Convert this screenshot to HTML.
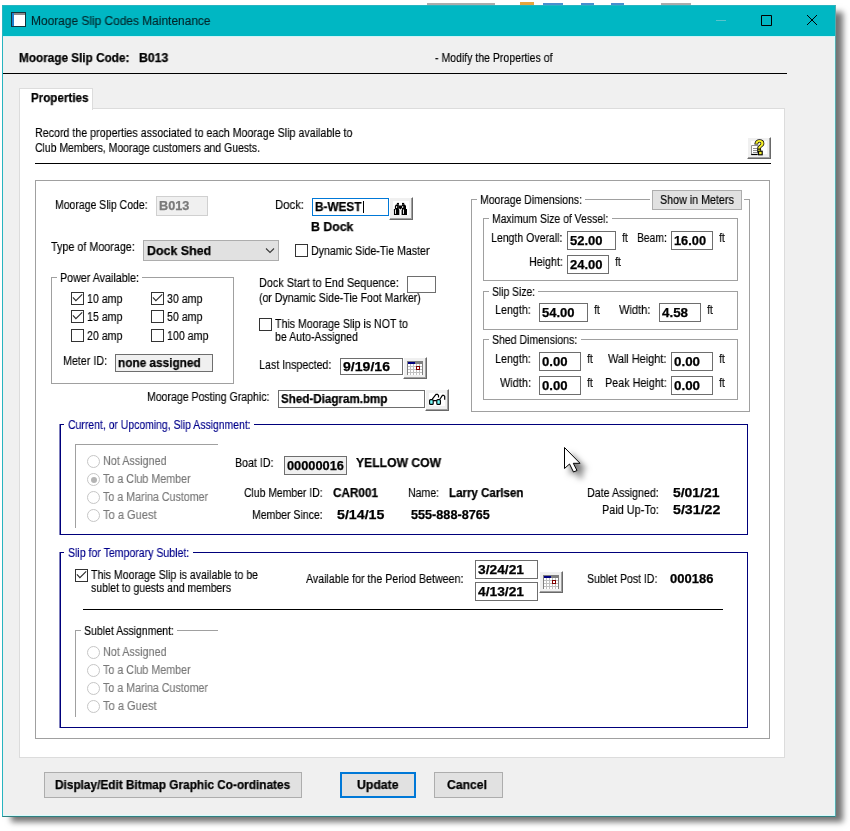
<!DOCTYPE html>
<html><head><meta charset="utf-8"><title>Moorage Slip Codes Maintenance</title>
<style>
html,body{margin:0;padding:0;}
body{width:850px;height:831px;position:relative;overflow:hidden;background:#fff;font-family:"Liberation Sans",sans-serif;font-size:12.5px;color:#000;}
.a{position:absolute;white-space:nowrap;line-height:13px;transform-origin:0 0;will-change:transform;-webkit-text-stroke:0.15px currentColor;}
.b{font-weight:bold;-webkit-text-stroke:0.25px currentColor;}
.win{position:absolute;left:2px;top:5px;width:834px;height:812px;box-sizing:border-box;background:#f0f0f0;border:1px solid #27b4c0;border-right-color:#5aa9ab;border-bottom-color:#2f7f80;box-shadow:8px 6px 6px -1px rgba(0,0,0,.55);}
.tb{position:absolute;left:0;top:0;width:832px;height:30px;background:#00b7c3;}
.hl{position:absolute;height:1px;background:#000;}
.in{position:absolute;box-sizing:border-box;background:#fff;border:1px solid #6e6e6e;}
.gb{position:absolute;box-sizing:border-box;border:1px solid #a0a0a0;}
.gm{position:absolute;background:#fff;height:3px;}
.cb{position:absolute;width:11px;height:11px;border:1px solid #333;background:#fff;}
.rb{position:absolute;width:11px;height:11px;border:1px solid #c6c6c6;border-radius:50%;background:#fff;}
.btn{position:absolute;box-sizing:border-box;background:#e1e1e1;border:1px solid #adadad;}
.b3{position:absolute;box-sizing:border-box;background:#f0f0f0;border:1px solid #fff;border-right-color:#696969;border-bottom-color:#696969;box-shadow:inset -1px -1px 0 #a0a0a0;}
.g{color:#787878;}
</style></head><body>
<div style="position:absolute;left:427px;top:3px;width:68px;height:2px;background:rgba(70,70,70,.45);"></div><div style="position:absolute;left:520px;top:2px;width:14px;height:3px;background:#e6a640;"></div><div style="position:absolute;left:543px;top:3px;width:20px;height:2px;background:#4a90d0;"></div><div style="position:absolute;left:581px;top:3px;width:13px;height:2px;background:#4a90d0;"></div><div style="position:absolute;left:611px;top:3px;width:13px;height:2px;background:#4a90d0;"></div><div style="position:absolute;left:661px;top:3px;width:30px;height:2px;background:rgba(90,90,90,.5);"></div>
<div class="win"><div class="tb"></div><div style="position:absolute;left:0;top:30px;width:832px;height:1px;background:#d0f4f6;"></div><div style="position:absolute;right:0;top:30px;width:1px;height:780px;background:#d8fbfc;"></div><div style="position:absolute;left:0;bottom:0;width:832px;height:1px;background:#d8fbfc;"></div></div>
<div style="position:absolute;left:11px;top:12px;width:15px;height:15px;box-sizing:border-box;background:#fff;border:1px solid #12343c;box-shadow:inset 2px 0 0 #1e7fd0, inset 0 2px 0 #8a8a8a;"></div>
<div class="a" style="left:31.1px;top:14px;font-size:12px;line-height:15px;color:#00262a;transform:scaleX(0.9929);">Moorage Slip Codes Maintenance</div>
<svg style="position:absolute;left:700px;top:5px" width="136" height="30" viewBox="0 0 136 30"><path d="M16 15.5h10" stroke="#58c4cc" stroke-width="1"/><path d="M61.5 10.5h10v10h-10z" fill="none" stroke="#000" stroke-width="1"/><path d="M107 10l10 10M117 10l-10 10" stroke="#000" stroke-width="1"/></svg>
<div class="a b" style="left:18.7px;top:52px;transform:scaleX(0.9406);">Moorage Slip Code:</div>
<div class="a b" style="left:138.5px;top:52px;transform:scaleX(0.9769);">B013</div>
<div class="a" style="left:435.1px;top:52px;transform:scaleX(0.8414);">- Modify the Properties of</div>
<div class="hl" style="left:3px;top:73px;width:784px;"></div>
<div style="position:absolute;left:19px;top:108px;width:766px;height:650px;background:#fff;border:1px solid #dcdcdc;box-sizing:border-box;"></div>
<div style="position:absolute;left:19px;top:88px;width:74px;height:22px;background:#fff;border:1px solid #dcdcdc;border-bottom:none;box-sizing:border-box;"></div>
<div class="a b" style="left:30.7px;top:92px;transform:scaleX(0.9281);">Properties</div>
<div class="a" style="left:34.7px;top:127px;transform:scaleX(0.8538);">Record the properties associated to each Moorage Slip available to</div>
<div class="a" style="left:34.7px;top:142px;transform:scaleX(0.8347);">Club Members, Moorage customers and Guests.</div>
<div class="hl" style="left:35px;top:163px;width:736px;"></div>
<div class="b3" style="left:747px;top:137px;width:24px;height:22px;"><div style="position:absolute;left:3px;top:3px;right:3px;bottom:4px;background:#fff;"></div><svg style="position:absolute;left:-6px;top:-6px;will-change:transform" width="35" height="32" viewBox="0 0 35 32"><path d="M9.5 13.5h6.5v9h-6.5z" fill="#fff" stroke="#909090" stroke-width="1"/><path d="M9.2 22.5h6.3" stroke="#000" stroke-width="1.2"/><path d="M11 16.5h4M11 18.5h4M11 20.5h4" stroke="#909090" stroke-width="1"/><text x="12.6" y="20.2" font-family="Liberation Sans, sans-serif" font-weight="bold" font-size="16" fill="#f4ee2a" stroke="#000" stroke-width="1.5" paint-order="stroke" textLength="10" lengthAdjust="spacingAndGlyphs">?</text><rect x="16.6" y="19.2" width="3.6" height="3.6" fill="#f4ee2a" stroke="#000" stroke-width="1.1"/></svg></div>
<div class="gb" style="left:35px;top:180px;width:735px;height:559px;border-color:#a0a0a0;"></div>
<div class="a" style="left:54.5px;top:199px;transform:scaleX(0.8381);">Moorage Slip Code:</div>
<div class="in" style="left:156px;top:196px;width:52px;height:20px;background:#f0f0f0;border-color:#d0d0d0;"></div>
<div class="a b" style="left:158.7px;top:200px;color:#7a7a7a;transform:scaleX(1.017);">B013</div>
<div class="a" style="left:274.5px;top:199px;transform:scaleX(0.9076);">Dock:</div>
<div class="in" style="left:312px;top:198px;width:77px;height:18px;border-color:#0078d7;"></div>
<div class="a b" style="left:314.7px;top:201px;transform:scaleX(0.9409);">B-WEST</div>
<div style="position:absolute;left:363px;top:201px;width:1px;height:12px;background:#000;"></div>
<div class="b3" style="left:389px;top:197px;width:24px;height:23px;"><div style="position:absolute;left:3px;top:3px;right:3px;bottom:4px;background:#fff;"></div><svg style="position:absolute;left:3px;top:4px" width="15" height="14" viewBox="0 0 15 14"><g fill="#000"><rect x="3.9" y="0.9" width="2.1" height="1.7"/><rect x="9" y="0.9" width="2.2" height="1.7"/><path d="M3 2.4h2.8v4.6h-3.9v-3z"/><path d="M9 2.4h2.9l1.1 1.6v3h-4z"/><path d="M5.7 3.6h3.4v2.2l-1.2 1.4h-1l-1.2-1.4z"/><path d="M0.9 6.9h4.9l0.5 1.5v4.5h-5.4z"/><path d="M9.1 6.9h4.9v6h-5.4v-4.5z"/></g><g fill="#fff"><rect x="2" y="7.5" width="0.9" height="4.4"/><rect x="10.1" y="7.5" width="0.9" height="4.4"/><rect x="3.1" y="4.1" width="1" height="2" rx=".5"/><rect x="9.2" y="4.1" width="1" height="2" rx=".5"/></g></svg></div>
<div class="a b" style="left:310.7px;top:220.5px;transform:scaleX(0.9843);">B Dock</div>
<div class="a" style="left:50.7px;top:241px;transform:scaleX(0.8614);">Type of Moorage:</div>
<div class="btn" style="left:143px;top:240px;width:136px;height:21px;"></div>
<div class="a b" style="left:146.6px;top:244px;font-size:13.5px;transform:scaleX(0.92);">Dock Shed</div>
<svg style="position:absolute;left:265px;top:247px" width="10" height="7" viewBox="0 0 10 7"><path d="M1 1.5l4 4 4-4" fill="none" stroke="#3a3a3a" stroke-width="1.1"/></svg>
<div class="cb" style="left:295px;top:244px;"></div>
<div class="a" style="left:310.7px;top:244.5px;transform:scaleX(0.8466);">Dynamic Side-Tie Master</div>
<div class="gb" style="left:51px;top:277px;width:183px;height:107px;border-color:#a0a0a0;"></div>
<div class="gm" style="left:57.4px;top:276px;width:85.0px;background:#fff;"></div>
<div class="a" style="left:59.5px;top:271.5px;transform:scaleX(0.8569);">Power Available:</div>
<div class="cb" style="left:71px;top:292px;"><svg width="11" height="11" viewBox="0 0 11 11" style="position:absolute;left:0;top:0"><path d="M0.9 4.3 L3.9 7.6 L10.2 1.3" fill="none" stroke="#2a2a2a" stroke-width="1.1"/></svg></div>
<div class="a" style="left:86.7px;top:293px;transform:scaleX(0.8489);">10 amp</div>
<div class="cb" style="left:71px;top:310px;"><svg width="11" height="11" viewBox="0 0 11 11" style="position:absolute;left:0;top:0"><path d="M0.9 4.3 L3.9 7.6 L10.2 1.3" fill="none" stroke="#2a2a2a" stroke-width="1.1"/></svg></div>
<div class="a" style="left:86.7px;top:311px;transform:scaleX(0.8489);">15 amp</div>
<div class="cb" style="left:71px;top:329px;"></div>
<div class="a" style="left:86.7px;top:330px;transform:scaleX(0.8489);">20 amp</div>
<div class="cb" style="left:151px;top:292px;"><svg width="11" height="11" viewBox="0 0 11 11" style="position:absolute;left:0;top:0"><path d="M0.9 4.3 L3.9 7.6 L10.2 1.3" fill="none" stroke="#2a2a2a" stroke-width="1.1"/></svg></div>
<div class="a" style="left:166.7px;top:293px;transform:scaleX(0.8489);">30 amp</div>
<div class="cb" style="left:151px;top:310px;"></div>
<div class="a" style="left:166.7px;top:311px;transform:scaleX(0.8489);">50 amp</div>
<div class="cb" style="left:151px;top:329px;"></div>
<div class="a" style="left:166.7px;top:330px;transform:scaleX(0.8509);">100 amp</div>
<div class="a" style="left:62.7px;top:355px;transform:scaleX(0.8559);">Meter ID:</div>
<div class="in" style="left:115px;top:354px;width:98px;height:18px;background:#f0f0f0;"></div>
<div class="a b" style="left:117.5px;top:357px;transform:scaleX(0.9437);">none assigned</div>
<div class="a" style="left:258.7px;top:276.8px;transform:scaleX(0.8671);">Dock Start to End Sequence:</div>
<div class="a" style="left:258.7px;top:292px;transform:scaleX(0.843);">(or Dynamic Side-Tie Foot Marker)</div>
<div class="in" style="left:407px;top:276px;width:29px;height:17px;"></div>
<div class="cb" style="left:259px;top:318px;"></div>
<div class="a" style="left:275.1px;top:317.5px;transform:scaleX(0.8483);">This Moorage Slip is NOT to</div>
<div class="a" style="left:275.1px;top:331px;transform:scaleX(0.8469);">be Auto-Assigned</div>
<div class="a" style="left:258.7px;top:359px;transform:scaleX(0.854);">Last Inspected:</div>
<div class="in" style="left:340px;top:358px;width:63px;height:17px;"></div>
<div class="a b" style="left:343.1px;top:360.5px;transform:scaleX(1.1266);">9/19/16</div>
<div class="b3" style="left:403px;top:357px;width:24px;height:22px;"><div style="position:absolute;left:3px;top:3px;right:3px;bottom:4px;background:#fff;"></div><svg style="position:absolute;left:3px;top:3px" width="16" height="14" viewBox="0 0 16 14" shape-rendering="crispEdges"><rect width="16" height="14" fill="#c0c0c0"/><rect width="16" height="3" fill="#808080"/><rect x="1" y="1" width="7" height="2" fill="#000080"/><rect x="0" y="0" width="1" height="14" fill="#808080"/><rect x="15" y="0" width="1" height="14" fill="#808080"/><rect x="1" y="3" width="2" height="2" fill="#fff"/><rect x="1" y="6" width="2" height="2" fill="#fff"/><rect x="1" y="9" width="2" height="2" fill="#fff"/><rect x="1" y="12" width="2" height="2" fill="#fff"/><rect x="4" y="3" width="2" height="2" fill="#fff"/><rect x="4" y="6" width="2" height="2" fill="#fff"/><rect x="4" y="9" width="2" height="2" fill="#fff"/><rect x="4" y="12" width="2" height="2" fill="#fff"/><rect x="7" y="3" width="2" height="2" fill="#fff"/><rect x="7" y="6" width="2" height="2" fill="#fff"/><rect x="7" y="9" width="2" height="2" fill="#fff"/><rect x="7" y="12" width="2" height="2" fill="#fff"/><rect x="10" y="3" width="2" height="2" fill="#fff"/><rect x="10" y="6" width="2" height="2" fill="#fff"/><rect x="10" y="9" width="2" height="2" fill="#fff"/><rect x="10" y="12" width="2" height="2" fill="#fff"/><rect x="13" y="3" width="2" height="2" fill="#fff"/><rect x="13" y="6" width="2" height="2" fill="#fff"/><rect x="13" y="9" width="2" height="2" fill="#fff"/><rect x="13" y="12" width="2" height="2" fill="#fff"/><rect x="9.5" y="5.5" width="3" height="3" fill="#fff" stroke="#800000" stroke-width="1"/></svg></div>
<div class="a" style="left:146.7px;top:391.4px;transform:scaleX(0.8429);">Moorage Posting Graphic:</div>
<div class="in" style="left:278px;top:390px;width:147px;height:18px;"></div>
<div class="a b" style="left:280.7px;top:393px;transform:scaleX(0.9284);">Shed-Diagram.bmp</div>
<div class="b3" style="left:425px;top:389px;width:24px;height:22px;"><div style="position:absolute;left:3px;top:3px;right:3px;bottom:4px;background:#fff;"></div><svg style="position:absolute;left:-6px;top:-5.7px" width="35" height="32" viewBox="0 0 35 32"><rect x="9.6" y="15.6" width="3.6" height="4.8" rx="1" fill="#7ff" stroke="#000" stroke-width="1.15"/><rect x="16.8" y="15.6" width="3.6" height="4.8" rx="1" fill="#7ff" stroke="#000" stroke-width="1.15"/><path d="M13.2 16.6h3.6M12.3 15.2L16 10.4h1.6l0.9 1v2.2M19.9 15.3L22.4 11.4h1.4l0.9 1v3.3" fill="none" stroke="#000" stroke-width="1.2"/></svg></div>
<div class="gb" style="left:471px;top:199px;width:279px;height:213px;border-color:#a0a0a0;"></div>
<div class="gm" style="left:477.4px;top:198px;width:108.0px;background:#fff;"></div>
<div class="a" style="left:479.5px;top:193.5px;transform:scaleX(0.8389);">Moorage Dimensions:</div>
<div class="gm" style="left:650px;top:198px;width:94px;"></div>
<div class="btn" style="left:652px;top:190px;width:90px;height:20px;"></div>
<div class="a" style="left:659.7px;top:194px;transform:scaleX(0.8566);">Show in Meters</div>
<div class="gb" style="left:483px;top:218px;width:255px;height:63px;border-color:#a0a0a0;"></div>
<div class="gm" style="left:489.4px;top:217px;width:122.20000000000005px;background:#fff;"></div>
<div class="a" style="left:491.5px;top:212.5px;transform:scaleX(0.8321);">Maximum Size of Vessel:</div>
<div class="a" style="left:490.7px;top:232.4px;transform:scaleX(0.8422);">Length Overall:</div>
<div class="in" style="left:567px;top:231px;width:49px;height:19px;"></div>
<div class="a b" style="left:569.5px;top:235px;transform:scaleX(1.0422);">52.00</div>
<div class="a" style="left:621.7px;top:232.4px;transform:scaleX(0.8342);">ft</div>
<div class="a" style="left:636.7px;top:232.4px;transform:scaleX(0.8246);">Beam:</div>
<div class="in" style="left:671px;top:231px;width:42px;height:19px;"></div>
<div class="a b" style="left:674.1px;top:235px;transform:scaleX(1.023);">16.00</div>
<div class="a" style="left:718.7px;top:232.4px;transform:scaleX(0.8342);">ft</div>
<div class="a" style="left:528.7px;top:256.4px;transform:scaleX(0.8533);">Height:</div>
<div class="in" style="left:567px;top:255px;width:42px;height:19px;"></div>
<div class="a b" style="left:569.5px;top:259px;transform:scaleX(1.0422);">24.00</div>
<div class="a" style="left:614.7px;top:256.4px;transform:scaleX(0.8342);">ft</div>
<div class="gb" style="left:483px;top:291px;width:255px;height:39px;border-color:#a0a0a0;"></div>
<div class="gm" style="left:489.4px;top:290px;width:49.0px;background:#fff;"></div>
<div class="a" style="left:491.5px;top:285.5px;transform:scaleX(0.8252);">Slip Size:</div>
<div class="a" style="left:494.7px;top:304.4px;transform:scaleX(0.8581);">Length:</div>
<div class="in" style="left:539px;top:303px;width:49px;height:19px;"></div>
<div class="a b" style="left:541.5px;top:307px;transform:scaleX(1.0422);">54.00</div>
<div class="a" style="left:593.5px;top:304.4px;transform:scaleX(0.8342);">ft</div>
<div class="a" style="left:619.1px;top:304.4px;transform:scaleX(0.8861);">Width:</div>
<div class="in" style="left:659px;top:303px;width:42px;height:19px;"></div>
<div class="a b" style="left:662.1px;top:307px;transform:scaleX(1.068);">4.58</div>
<div class="a" style="left:707.1px;top:304.4px;transform:scaleX(0.8342);">ft</div>
<div class="gb" style="left:483px;top:339px;width:255px;height:61px;border-color:#a0a0a0;"></div>
<div class="gm" style="left:489.4px;top:338px;width:91.20000000000005px;background:#fff;"></div>
<div class="a" style="left:491.5px;top:333.5px;transform:scaleX(0.8398);">Shed Dimensions:</div>
<div class="a" style="left:494.7px;top:353px;transform:scaleX(0.8581);">Length:</div>
<div class="in" style="left:539px;top:352px;width:42px;height:19px;"></div>
<div class="a b" style="left:541.5px;top:356px;transform:scaleX(1.0516);">0.00</div>
<div class="a" style="left:586.5px;top:353px;transform:scaleX(0.8342);">ft</div>
<div class="a" style="left:608.1px;top:353px;transform:scaleX(0.8727);">Wall Height:</div>
<div class="in" style="left:671px;top:352px;width:42px;height:19px;"></div>
<div class="a b" style="left:674.1px;top:356px;transform:scaleX(1.068);">0.00</div>
<div class="a" style="left:718.7px;top:353px;transform:scaleX(0.8342);">ft</div>
<div class="a" style="left:499.5px;top:377px;transform:scaleX(0.8748);">Width:</div>
<div class="in" style="left:539px;top:376px;width:42px;height:19px;"></div>
<div class="a b" style="left:541.5px;top:380px;transform:scaleX(1.0516);">0.00</div>
<div class="a" style="left:586.5px;top:377px;transform:scaleX(0.8342);">ft</div>
<div class="a" style="left:604.7px;top:377px;transform:scaleX(0.8634);">Peak Height:</div>
<div class="in" style="left:671px;top:376px;width:42px;height:19px;"></div>
<div class="a b" style="left:674.1px;top:380px;transform:scaleX(1.068);">0.00</div>
<div class="a" style="left:718.7px;top:377px;transform:scaleX(0.8342);">ft</div>
<div class="gb" style="left:60px;top:424px;width:688px;height:111px;border-color:#00007b;"></div>
<div style="position:absolute;left:59px;top:424px;width:1px;height:111px;background:rgba(0,0,123,.5);"></div>
<div class="gm" style="left:64.4px;top:423px;width:189.6px;"></div>
<div class="a" style="left:67.5px;top:419px;color:#00008b;transform:scaleX(0.8344);">Current, or Upcoming, Slip Assignment:</div>
<div style="position:absolute;left:75px;top:444px;width:143px;height:84px;border-left:1px solid #a0a0a0;border-top:1px solid #a0a0a0;box-sizing:border-box;"></div>
<div class="rb" style="left:87px;top:455px;"></div>
<div class="a g" style="left:102.5px;top:455px;transform:scaleX(0.8633);">Not Assigned</div>
<div class="rb" style="left:87px;top:473px;"><div style="position:absolute;left:2.5px;top:2.5px;width:6px;height:6px;border-radius:50%;background:#b4b4b4;"></div></div>
<div class="a g" style="left:102.5px;top:473px;transform:scaleX(0.8578);">To a Club Member</div>
<div class="rb" style="left:87px;top:491px;"></div>
<div class="a g" style="left:102.5px;top:491px;transform:scaleX(0.8547);">To a Marina Customer</div>
<div class="rb" style="left:87px;top:509px;"></div>
<div class="a g" style="left:102.5px;top:509px;transform:scaleX(0.8866);">To a Guest</div>
<div class="a" style="left:234.7px;top:457px;transform:scaleX(0.8501);">Boat ID:</div>
<div class="in" style="left:284px;top:456px;width:63px;height:19px;background:#f0f0f0;"></div>
<div class="a b" style="left:286.7px;top:460px;transform:scaleX(1.0247);">00000016</div>
<div class="a b" style="left:356.1px;top:457px;transform:scaleX(0.9714);">YELLOW COW</div>
<div class="a" style="left:243.5px;top:487px;transform:scaleX(0.8319);">Club Member ID:</div>
<div class="a b" style="left:332.7px;top:487px;transform:scaleX(0.9387);">CAR001</div>
<div class="a" style="left:407.7px;top:487px;transform:scaleX(0.8417);">Name:</div>
<div class="a b" style="left:448.7px;top:487px;transform:scaleX(0.923);">Larry Carlsen</div>
<div class="a" style="left:586.7px;top:487px;transform:scaleX(0.8538);">Date Assigned:</div>
<div class="a b" style="left:672.7px;top:487px;transform:scaleX(1.1122);">5/01/21</div>
<div class="a" style="left:251.5px;top:509px;transform:scaleX(0.8399);">Member Since:</div>
<div class="a b" style="left:336.7px;top:509px;transform:scaleX(1.1362);">5/14/15</div>
<div class="a b" style="left:410.7px;top:509px;transform:scaleX(1.0121);">555-888-8765</div>
<div class="a" style="left:601.7px;top:504px;transform:scaleX(0.8697);">Paid Up-To:</div>
<div class="a b" style="left:672.7px;top:504px;transform:scaleX(1.1362);">5/31/22</div>
<div class="gb" style="left:60px;top:552px;width:688px;height:176px;border-color:#00007b;"></div>
<div style="position:absolute;left:59px;top:552px;width:1px;height:176px;background:rgba(0,0,123,.5);"></div>
<div class="gm" style="left:64.4px;top:551px;width:128.2px;"></div>
<div class="a" style="left:67.5px;top:547px;color:#00008b;transform:scaleX(0.844);">Slip for Temporary Sublet:</div>
<div class="cb" style="left:75px;top:569px;"><svg width="11" height="11" viewBox="0 0 11 11" style="position:absolute;left:0;top:0"><path d="M0.9 4.3 L3.9 7.6 L10.2 1.3" fill="none" stroke="#2a2a2a" stroke-width="1.1"/></svg></div>
<div class="a" style="left:91.1px;top:569px;transform:scaleX(0.8463);">This Moorage Slip is available to be</div>
<div class="a" style="left:91.1px;top:582px;transform:scaleX(0.8361);">sublet to guests and members</div>
<div class="a" style="left:306.1px;top:573px;transform:scaleX(0.8526);">Available for the Period Between:</div>
<div class="in" style="left:475px;top:560px;width:63px;height:19px;"></div>
<div class="a b" style="left:478.1px;top:564px;transform:scaleX(1.1026);">3/24/21</div>
<div class="in" style="left:475px;top:582px;width:63px;height:19px;"></div>
<div class="a b" style="left:478.1px;top:586px;transform:scaleX(1.1026);">4/13/21</div>
<div class="b3" style="left:539px;top:571px;width:24px;height:22px;"><div style="position:absolute;left:3px;top:3px;right:3px;bottom:4px;background:#fff;"></div><svg style="position:absolute;left:3px;top:3px" width="16" height="14" viewBox="0 0 16 14" shape-rendering="crispEdges"><rect width="16" height="14" fill="#c0c0c0"/><rect width="16" height="3" fill="#808080"/><rect x="1" y="1" width="7" height="2" fill="#000080"/><rect x="0" y="0" width="1" height="14" fill="#808080"/><rect x="15" y="0" width="1" height="14" fill="#808080"/><rect x="1" y="3" width="2" height="2" fill="#fff"/><rect x="1" y="6" width="2" height="2" fill="#fff"/><rect x="1" y="9" width="2" height="2" fill="#fff"/><rect x="1" y="12" width="2" height="2" fill="#fff"/><rect x="4" y="3" width="2" height="2" fill="#fff"/><rect x="4" y="6" width="2" height="2" fill="#fff"/><rect x="4" y="9" width="2" height="2" fill="#fff"/><rect x="4" y="12" width="2" height="2" fill="#fff"/><rect x="7" y="3" width="2" height="2" fill="#fff"/><rect x="7" y="6" width="2" height="2" fill="#fff"/><rect x="7" y="9" width="2" height="2" fill="#fff"/><rect x="7" y="12" width="2" height="2" fill="#fff"/><rect x="10" y="3" width="2" height="2" fill="#fff"/><rect x="10" y="6" width="2" height="2" fill="#fff"/><rect x="10" y="9" width="2" height="2" fill="#fff"/><rect x="10" y="12" width="2" height="2" fill="#fff"/><rect x="13" y="3" width="2" height="2" fill="#fff"/><rect x="13" y="6" width="2" height="2" fill="#fff"/><rect x="13" y="9" width="2" height="2" fill="#fff"/><rect x="13" y="12" width="2" height="2" fill="#fff"/><rect x="9.5" y="5.5" width="3" height="3" fill="#fff" stroke="#800000" stroke-width="1"/></svg></div>
<div class="a" style="left:586.7px;top:573px;transform:scaleX(0.8444);">Sublet Post ID:</div>
<div class="a b" style="left:669.7px;top:573px;transform:scaleX(1.0403);">000186</div>
<div class="hl" style="left:83px;top:609px;width:640px;"></div>
<div style="position:absolute;left:75px;top:630px;width:143px;height:87px;border-left:1px solid #a0a0a0;border-top:1px solid #a0a0a0;box-sizing:border-box;"></div>
<div class="gm" style="left:81px;top:629px;width:96px;"></div>
<div class="a" style="left:83.5px;top:624.5px;transform:scaleX(0.841);">Sublet Assignment:</div>
<div class="rb" style="left:87px;top:646px;"></div>
<div class="a g" style="left:103.1px;top:646px;transform:scaleX(0.8633);">Not Assigned</div>
<div class="rb" style="left:87px;top:664px;"></div>
<div class="a g" style="left:103.1px;top:664px;transform:scaleX(0.8578);">To a Club Member</div>
<div class="rb" style="left:87px;top:682px;"></div>
<div class="a g" style="left:103.1px;top:682px;transform:scaleX(0.8539);">To a Marina Customer</div>
<div class="rb" style="left:87px;top:700px;"></div>
<div class="a g" style="left:103.1px;top:700px;transform:scaleX(0.8866);">To a Guest</div>
<div class="btn" style="left:44px;top:772px;width:258px;height:26px;"></div>
<div class="a b" style="left:54.7px;top:778.5px;transform:scaleX(0.9455);">Display/Edit Bitmap Graphic Co-ordinates</div>
<div class="btn" style="left:340px;top:772px;width:76px;height:26px;border:2px solid #0078d7;"></div>
<div class="a b" style="left:356.6px;top:778.5px;transform:scaleX(0.9794);">Update</div>
<div class="btn" style="left:434px;top:772px;width:69px;height:26px;"></div>
<div class="a b" style="left:447.1px;top:778.5px;transform:scaleX(0.9756);">Cancel</div>
<svg style="position:absolute;left:555px;top:440px;filter:drop-shadow(6px 6px 3px rgba(0,0,0,.55));" width="40" height="40" viewBox="0 0 40 40"><path d="M9.5 7.5V28.5L14.5 24L18.5 32L22 30.5L18.3 23.3H25z" fill="#fff" stroke="#000" stroke-width="1"/></svg>
</body></html>
